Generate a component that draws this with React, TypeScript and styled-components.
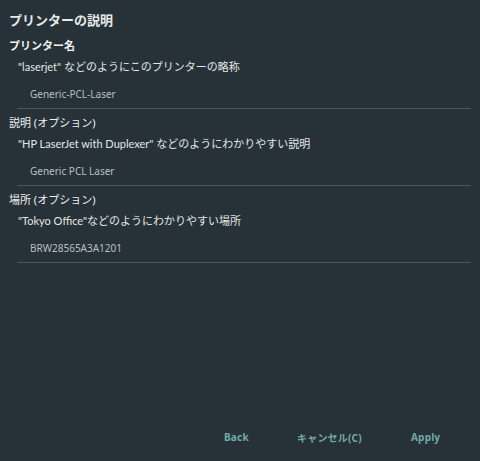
import React from "react";
import styled, { createGlobalStyle } from "styled-components";

const GlobalStyle = createGlobalStyle`
    html, body {
        margin: 0;
        padding: 0;
        background: #263238;
    }
    body {
        font-family: "Noto Sans", "Noto Sans CJK JP", sans-serif;
    }
`

const Wrap = styled.div`
    display: flex;
    flex-direction: column;
    width: 480px;
    height: 461px;
    box-sizing: border-box;
    padding: 11px 9px 0 9px;
    background: #263238;
    color: #e6e9ea;
`

const Title = styled.div`
    font-size: 13px;
    font-weight: bold;
    line-height: 18px;
`

const Section = styled.div<{ first?: boolean }>`
    display: flex;
    flex-direction: column;
    margin-top: ${ p => p.first ? '9px' : '6px' };
`

const Label = styled.div<{ bold?: boolean }>`
    font-size: 11px;
    font-weight: ${ p => p.bold ? 'bold' : 'normal' };
    line-height: 16px;
    color: #eef0f1;
`

const Hint = styled.div`
    font-family: Lato, "Noto Sans CJK JP", sans-serif;
    font-size: 11px;
    line-height: 16px;
    margin-top: 5px;
    padding-left: 9px;
    color: #e3e6e7;
`

const Field = styled.div`
    margin: 8px 0 0 8px;
    padding: 3px 0 6px 13px;
    font-size: 10px;
    line-height: 16px;
    color: #b9bfc2;
    border-bottom: 1px solid #4b565c;
`

const Grow = styled.div`
    flex: 1;
`

const Footer = styled.div`
    display: flex;
    align-items: center;
    height: 48px;
    padding-left: 215px;
`

const FlatButton = styled.button<{ width: number }>`
    background: none;
    border: none;
    padding: 0;
    width: ${ p => p.width }px;
    text-align: left;
    font-family: inherit;
    font-size: 10px;
    font-weight: bold;
    color: #74aaa7;
    letter-spacing: 0.2px;
    cursor: pointer;
`

const fields = [
    { label: 'プリンター名', option: '', hint: '"laserjet" などのようにこのプリンターの略称', value: 'Generic-PCL-Laser' },
    { label: '説明', option: ' (オプション)', hint: '"HP LaserJet with Duplexer" などのようにわかりやすい説明', value: 'Generic PCL Laser' },
    { label: '場所', option: ' (オプション)', hint: '"Tokyo Office"などのようにわかりやすい場所', value: 'BRW28565A3A1201' },
]

export default function App () {
    return (
        <Wrap>
            <GlobalStyle/>
            <Title>プリンターの説明</Title>
            { fields.map((f, i) =>
            <Section key={ f.label } first={ i == 0 }>
                <Label bold={ !f.option }>{ f.label }{ f.option }</Label>
                <Hint>{ f.hint }</Hint>
                <Field>{ f.value }</Field>
            </Section> ) }
            <Grow/>
            <Footer>
                <FlatButton width={ 73 }>Back</FlatButton>
                <FlatButton width={ 114 }>キャンセル(C)</FlatButton>
                <FlatButton width={ 40 }>Apply</FlatButton>
            </Footer>
        </Wrap>
    )
}
